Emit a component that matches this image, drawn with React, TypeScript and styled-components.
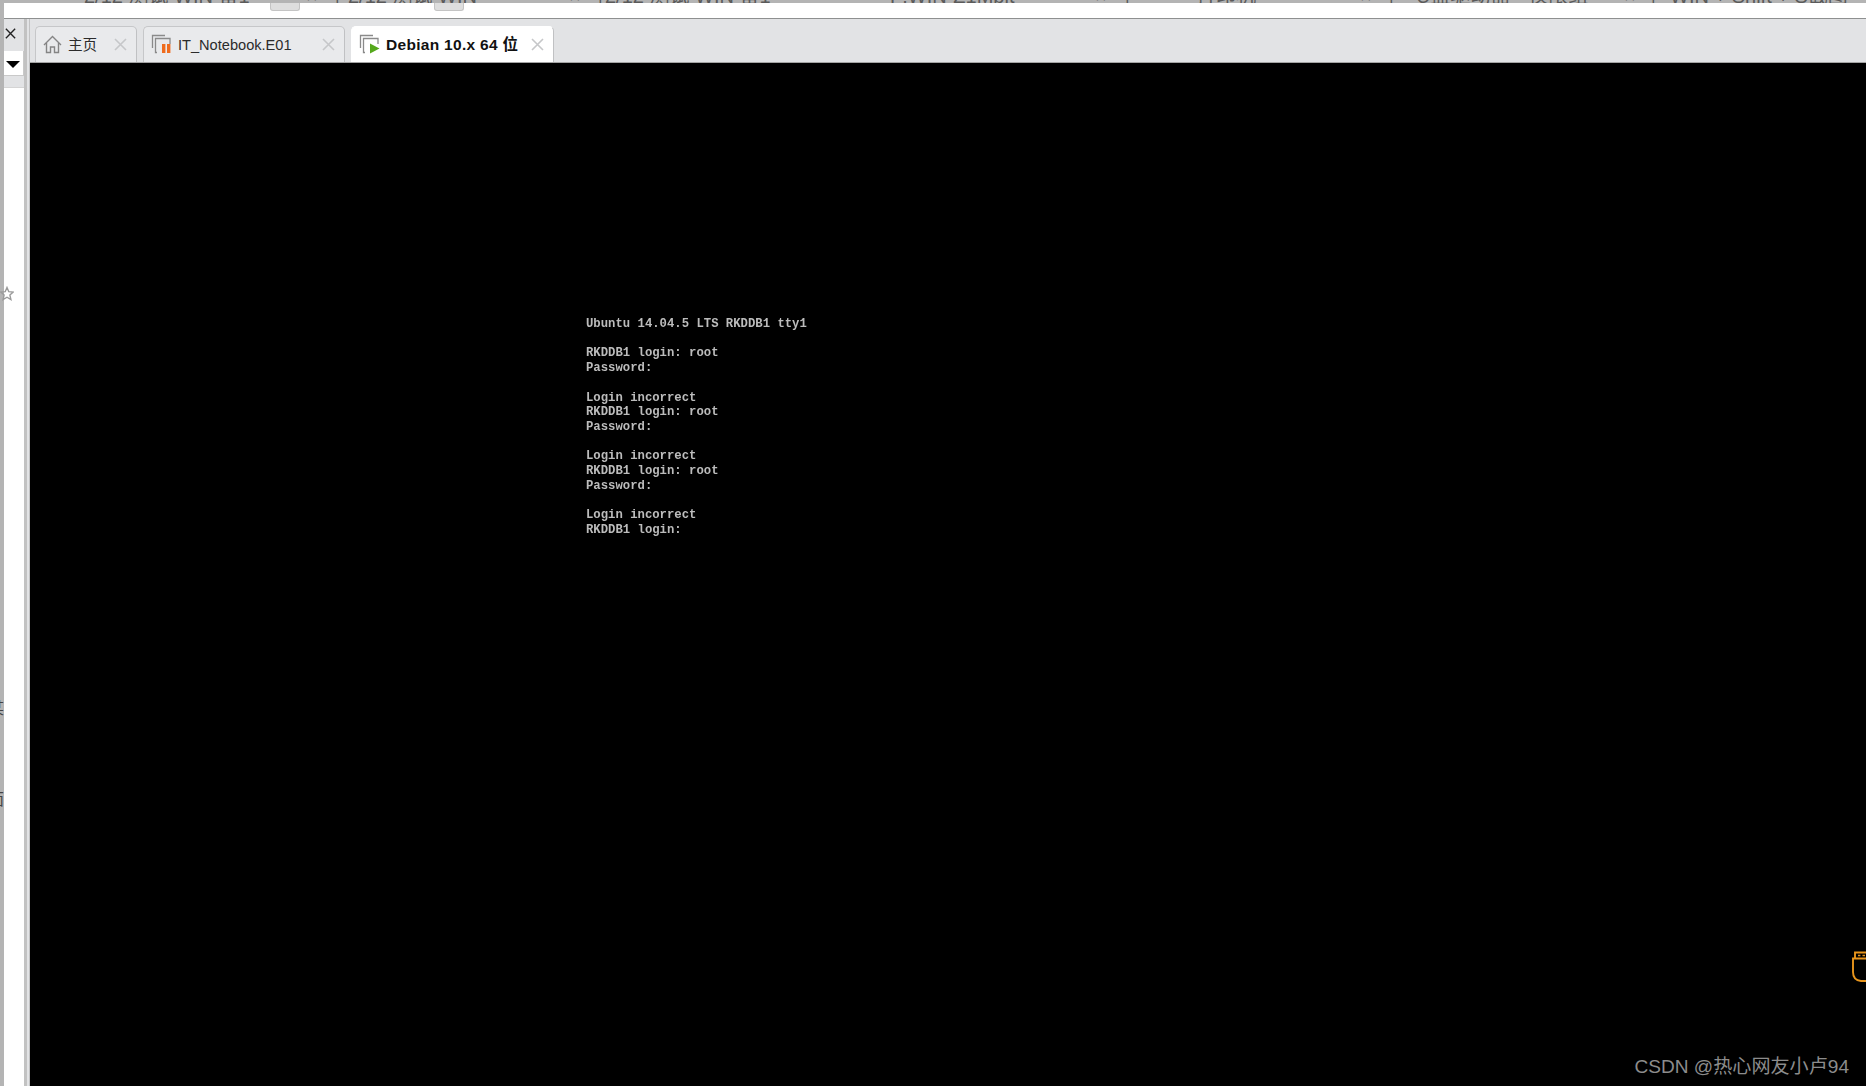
import React from "react";
import styled, { createGlobalStyle } from "styled-components";

const Global = createGlobalStyle`
  html, body { margin: 0; padding: 0; background: #000; overflow: hidden; }
  #root { height: 1086px; }
`;

const Page = styled.div`
  position: relative;
  width: 1866px;
  height: 1086px;
  display: flex;
  flex-direction: column;
  overflow: hidden;
  font-family: "Liberation Sans", "Noto Sans CJK SC", sans-serif;
`;

const TopStrip = styled.div`
  height: 3px;
  flex: none;
  background: #b4b4b4;
  display: flex;
  overflow: hidden;
`;

const ClippedItem = styled.div<{ $width: number }>`
  flex: none;
  width: ${(p) => p.$width}px;
  height: 3px;
  display: flex;
  align-items: flex-end;
  overflow: hidden;
`;

const ClippedText = styled.span`
  flex: none;
  margin-bottom: -3px;
  font-size: 20px;
  line-height: 20px;
  color: #5a5a5a;
  white-space: pre;
`;

const Body = styled.div`
  flex: 1;
  display: flex;
  min-height: 0;
`;

const LeftEdge = styled.div`
  width: 4px;
  flex: none;
  background: #b4b4b4;
`;

const Main = styled.div`
  flex: 1;
  min-width: 0;
  display: flex;
  flex-direction: column;
`;

const WhiteBand = styled.div`
  height: 15px;
  flex: none;
  background: #fff;
  display: flex;
`;

const BandKey = styled.div<{ $offset: number }>`
  width: 30px;
  height: 8px;
  margin-left: ${(p) => p.$offset}px;
  background: #dedede;
  border: 1px solid #c4c4c4;
  border-top: none;
  border-radius: 0 0 3px 3px;
  box-sizing: border-box;
`;

const Rule = styled.div`
  height: 1px;
  flex: none;
  background: #8e9090;
`;

const Content = styled.div`
  flex: 1;
  min-height: 0;
  display: flex;
`;

const Sidebar = styled.aside`
  width: 20px;
  flex: none;
  background: #e2e3e5;
  display: flex;
  flex-direction: column;
`;

const SidebarClose = styled.div`
  height: 32px;
  flex: none;
  display: flex;
  align-items: center;
  padding: 0 0 3px 1px;
  box-sizing: border-box;
`;

const Dropdown = styled.div`
  height: 25px;
  flex: none;
  background: #fff;
  border-right: 1px solid #c9c9c9;
  border-bottom: 1px solid #c9c9c9;
  box-sizing: border-box;
  display: flex;
  align-items: center;
  justify-content: center;
  padding: 3px 2px 0 0;
`;

const Arrow = styled.div`
  width: 0;
  height: 0;
  border-left: 7px solid transparent;
  border-right: 7px solid transparent;
  border-top: 7px solid #000;
`;

const Divider = styled.div`
  height: 11px;
  flex: none;
`;

const TreePanel = styled.div`
  flex: 1;
  background: #fff;
  border-top: 1px solid #d4d4d4;
`;

const Splitter = styled.div`
  width: 6px;
  flex: none;
  background: linear-gradient(90deg, #c2c2c2 0 45%, #e2e3e5 55% 85%, #9a9a9a 100%);
`;

const Workspace = styled.div`
  flex: 1;
  min-width: 0;
  display: flex;
  flex-direction: column;
`;

const TabBar = styled.div`
  height: 44px;
  flex: none;
  background: #e2e3e5;
  display: flex;
  align-items: flex-end;
  gap: 6px;
  padding-left: 5px;
  box-sizing: border-box;
  border-bottom: 1px solid #a4a4a4;
`;

const Tab = styled.div<{ $width: number; $active?: boolean }>`
  width: ${(p) => p.$width}px;
  height: 36px;
  box-sizing: border-box;
  display: flex;
  align-items: center;
  padding: 0 9px 0 7px;
  gap: 6px;
  background: ${(p) => (p.$active ? "#fff" : "#e9eaec")};
  border: 1px solid ${(p) => (p.$active ? "#fff" : "#c6c7c9")};
  border-bottom: none;
  border-right-color: #c0c1c3;
  border-radius: 5px 5px 0 0;
`;

const TabLabel = styled.span<{ $active?: boolean }>`
  flex: 1;
  font-size: ${(p) => (p.$active ? 15.5 : 14.6)}px;
  letter-spacing: ${(p) => (p.$active ? 0.3 : 0)}px;
  line-height: 20px;
  white-space: nowrap;
  color: ${(p) => (p.$active ? "#111" : "#2b2b2b")};
  font-weight: ${(p) => (p.$active ? 700 : 400)};
`;

const Terminal = styled.main`
  flex: 1;
  min-height: 0;
  background: #000;
  padding: 254px 0 0 556px;
  box-sizing: border-box;
`;

const TerminalText = styled.pre`
  margin: 0;
  font-family: "Liberation Mono", "DejaVu Sans Mono", monospace;
  font-size: 12.28px;
  line-height: 14.72px;
  font-weight: 700;
  color: #bcbcbc;
  filter: blur(0.35px);
`;

const Watermark = styled.div`
  position: absolute;
  right: 17px;
  bottom: 7px;
  font-size: 19.1px;
  line-height: 24px;
  color: #8c8c8c;
  white-space: nowrap;
`;

const Overlay = styled.div<{ $left: number; $top: number }>`
  position: absolute;
  left: ${(p) => p.$left}px;
  top: ${(p) => p.$top}px;
  line-height: 0;
`;

const EdgeGlyph = styled.div<{ $top: number; $height: number }>`
  position: absolute;
  left: 0;
  top: ${(p) => p.$top}px;
  width: 4px;
  height: ${(p) => p.$height}px;
  overflow: hidden;
  font-size: 16px;
  line-height: ${(p) => p.$height}px;
  color: #444;
  direction: rtl;
  white-space: nowrap;
`;

const Close = ({ color = "#c6c7c9", size = 13 }: { color?: string; size?: number }) => (
  <svg width={size} height={size} viewBox="0 0 13 13" fill="none" stroke={color} strokeWidth="1.6">
    <path d="M1 1l11 11M12 1L1 12" />
  </svg>
);

const HomeIcon = () => (
  <svg width="19" height="19" viewBox="0 0 19 19" fill="none" stroke="#858585" strokeWidth="1.4">
    <path d="M1 10L9.5 1.5 18 10" />
    <path d="M3.5 8v9.5h4V12h4v5.5h4V8" />
  </svg>
);

const VmIcon = ({ children }: { children: React.ReactNode }) => (
  <svg width="21" height="21" viewBox="0 0 21 21" fill="none">
    <path d="M14 1.5H1.5V14" stroke="#8a8a8a" strokeWidth="1.3" />
    <path d="M6 18.5H4.5V4.5H19V10" stroke="#8a8a8a" strokeWidth="1.3" />
    {children}
  </svg>
);

const lines = `Ubuntu 14.04.5 LTS RKDDB1 tty1

RKDDB1 login: root
Password:

Login incorrect
RKDDB1 login: root
Password:

Login incorrect
RKDDB1 login: root
Password:

Login incorrect
RKDDB1 login:`;

const topItems: [number, string][] = [
  [84, ""],
  [222, "2/12 测试 WIN 备1"],
  [26, "×"],
  [16, "│"],
  [142, "2/12 测试 WIN"],
  [79, "▔▔▔"],
  [26, "×"],
  [10, "│"],
  [285, "2/12 测试 WIN 备1"],
  [205, "F:WIN-Z1Mbit"],
  [27, "×"],
  [74, "│"],
  [164, "打印机"],
  [26, "×"],
  [30, "│"],
  [208, "U盘驱动器 · 仅限组"],
  [24, "×"],
  [22, "│"],
  [196, "WIN + Shift + S截图"],
];

export default function App() {
  return (
    <>
      <Global />
      <Page>
        <TopStrip>
          {topItems.map(([w, t], i) => (
            <ClippedItem key={i} $width={w}>
              <ClippedText>{t}</ClippedText>
            </ClippedItem>
          ))}
        </TopStrip>
        <Body>
          <LeftEdge />
          <Main>
            <WhiteBand>
              <BandKey $offset={266} />
              <BandKey $offset={134} />
            </WhiteBand>
            <Rule />
            <Content>
              <Sidebar>
                <SidebarClose>
                  <Close color="#222" size={11} />
                </SidebarClose>
                <Dropdown>
                  <Arrow />
                </Dropdown>
                <Divider />
                <TreePanel />
              </Sidebar>
              <Splitter />
              <Workspace>
                <TabBar>
                  <Tab $width={102}>
                    <HomeIcon />
                    <TabLabel>主页</TabLabel>
                    <Close />
                  </Tab>
                  <Tab $width={202}>
                    <VmIcon>
                      <rect x="11" y="10" width="3.4" height="9" fill="#ef6c1e" />
                      <rect x="16" y="10" width="3.4" height="9" fill="#ef6c1e" />
                    </VmIcon>
                    <TabLabel>IT_Notebook.E01</TabLabel>
                    <Close />
                  </Tab>
                  <Tab $width={203} $active>
                    <VmIcon>
                      <path d="M11 9.5l9.5 5-9.5 5z" fill="#55a81c" />
                    </VmIcon>
                    <TabLabel $active>Debian 10.x 64 位</TabLabel>
                    <Close />
                  </Tab>
                </TabBar>
                <Terminal>
                  <TerminalText>{lines}</TerminalText>
                </Terminal>
              </Workspace>
            </Content>
          </Main>
        </Body>
        <Overlay $left={0} $top={286}>
          <svg width="14" height="16" viewBox="0 0 14 16" fill="none" stroke="#9a9a9a" strokeWidth="1.4">
            <path d="M7 1.5l1.8 4.2 4.4.4-3.3 3 1 4.4L7 11.2l-3.9 2.3 1-4.4-3.3-3 4.4-.4z" />
          </svg>
        </Overlay>
        <EdgeGlyph $top={699} $height={20}>某</EdgeGlyph>
        <EdgeGlyph $top={790} $height={20}>面</EdgeGlyph>
        <Overlay $left={1851} $top={951}>
          <svg width="15" height="32" viewBox="0 0 15 32" fill="none" stroke="#e8951c" strokeWidth="1.9">
            <path d="M4 8V1.5H15" />
            <path d="M15 7.5H2V21c0 5 3 8.5 8 9h5" />
            <path d="M7 4.5h2.4M11.5 4.5H14" strokeWidth="1.4" />
          </svg>
        </Overlay>
        <Watermark>CSDN @热心网友小卢94</Watermark>
      </Page>
    </>
  );
}
